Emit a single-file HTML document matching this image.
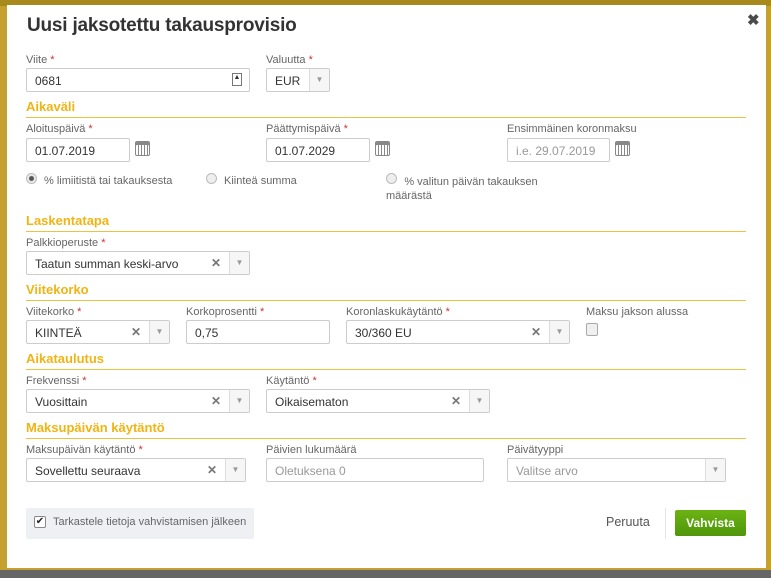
<!DOCTYPE html><html><head><meta charset="utf-8"><style>
*{box-sizing:border-box;margin:0;padding:0}
body{width:771px;height:578px;overflow:hidden;background:#c4a02e;font-family:"Liberation Sans",sans-serif;position:relative}
.top{position:absolute;left:0;top:0;width:771px;height:6px;background:#a88a1c}
.bot{position:absolute;left:0;top:570px;width:771px;height:8px;background:#666}
.m{position:absolute;left:7px;top:5px;width:759px;height:563px;background:#fff}
.a{position:absolute}
.t{left:27px;top:15px;font-size:19px;color:#333;font-weight:bold;letter-spacing:-0.2px}
.x{left:747px;top:11px;font-size:15px;color:#4a4a4a;font-weight:bold}
.l{font-size:11px;color:#666;white-space:nowrap}
.l b{color:#c33;font-weight:normal}
.h{left:26px;width:720px;font-size:13px;font-weight:bold;color:#f0b414;border-bottom:1px solid #f0c040;height:18px;line-height:14px}
.i{height:24px;border:1px solid #ccc;border-radius:2px;font-size:12px;color:#333;padding:5px 8px;white-space:nowrap;background:#fff}
.ph{color:#999}
.s .c{position:absolute;right:28px;top:4px;font-size:12px;color:#777;font-weight:bold}
.s .d{position:absolute;right:0;top:0;width:20px;height:22px;border-left:1px solid #ddd;background:#f6f6f6;color:#999;font-size:8px;text-align:center;line-height:22px}
.cal{width:15px;height:15px;border:1px solid #888;border-radius:2px;background:repeating-linear-gradient(90deg,#fff 0 2px,#888 2px 3px);box-shadow:inset 0 3px 0 #888}
.r{width:11px;height:11px;border-radius:50%;border:1px solid #bbb;background:#eee}
</style></head><body>
<div class="top"></div><div class="bot"></div>
<div class="m"></div>
<div class="a t">Uusi jaksotettu takausprovisio</div>
<div class="a x">✖</div>

<div class="a l" style="left:26px;top:54px">Viite <b>*</b></div>
<div class="a i" style="left:26px;top:68px;width:224px">0681<span style="position:absolute;right:7px;top:4px;width:10px;height:13px;border:1px solid #777;font-size:7px;text-align:center">▲</span></div>
<div class="a l" style="left:266px;top:54px">Valuutta <b>*</b></div>
<div class="a i s" style="left:266px;top:68px;width:64px">EUR<span class="d">▼</span></div>

<div class="a h" style="top:100px">Aikaväli</div>
<div class="a l" style="left:26px;top:123px">Aloituspäivä <b>*</b></div>
<div class="a i" style="left:26px;top:138px;width:104px">01.07.2019</div><div class="a cal" style="left:135px;top:141px"></div>
<div class="a l" style="left:266px;top:123px">Päättymispäivä <b>*</b></div>
<div class="a i" style="left:266px;top:138px;width:104px">01.07.2029</div><div class="a cal" style="left:375px;top:141px"></div>
<div class="a l" style="left:507px;top:123px">Ensimmäinen koronmaksu</div>
<div class="a i ph" style="left:507px;top:138px;width:103px">i.e. 29.07.2019</div><div class="a cal" style="left:615px;top:141px"></div>

<div class="a r" style="left:26px;top:173px;background:radial-gradient(#555 0 2px,#eee 3px)"></div><div class="a l" style="left:44px;top:175px">% limiitistä tai takauksesta</div>
<div class="a r" style="left:206px;top:173px"></div><div class="a l" style="left:224px;top:175px">Kiinteä summa</div>
<div class="a r" style="left:386px;top:173px"></div><div class="a l" style="left:386px;top:175px;line-height:14px">&nbsp;&nbsp;&nbsp;&nbsp;&nbsp;&nbsp;% valitun päivän takauksen<br>määrästä</div>

<div class="a h" style="top:214px">Laskentatapa</div>
<div class="a l" style="left:26px;top:237px">Palkkioperuste <b>*</b></div>
<div class="a i s" style="left:26px;top:251px;width:224px">Taatun summan keski-arvo<span class="c">✕</span><span class="d">▼</span></div>

<div class="a h" style="top:283px">Viitekorko</div>
<div class="a l" style="left:26px;top:306px">Viitekorko <b>*</b></div>
<div class="a i s" style="left:26px;top:320px;width:144px">KIINTEÄ<span class="c">✕</span><span class="d">▼</span></div>
<div class="a l" style="left:186px;top:306px">Korkoprosentti <b>*</b></div>
<div class="a i" style="left:186px;top:320px;width:144px">0,75</div>
<div class="a l" style="left:346px;top:306px">Koronlaskukäytäntö <b>*</b></div>
<div class="a i s" style="left:346px;top:320px;width:224px">30/360 EU<span class="c">✕</span><span class="d">▼</span></div>
<div class="a l" style="left:586px;top:306px">Maksu jakson alussa</div>
<div class="a" style="left:586px;top:323px;width:12px;height:13px;border:1px solid #aaa;border-radius:2px;background:#f0f0f0"></div>

<div class="a h" style="top:352px">Aikataulutus</div>
<div class="a l" style="left:26px;top:375px">Frekvenssi <b>*</b></div>
<div class="a i s" style="left:26px;top:389px;width:224px">Vuosittain<span class="c">✕</span><span class="d">▼</span></div>
<div class="a l" style="left:266px;top:375px">Käytäntö <b>*</b></div>
<div class="a i s" style="left:266px;top:389px;width:224px">Oikaisematon<span class="c">✕</span><span class="d">▼</span></div>

<div class="a h" style="top:421px">Maksupäivän käytäntö</div>
<div class="a l" style="left:26px;top:444px">Maksupäivän käytäntö <b>*</b></div>
<div class="a i s" style="left:26px;top:458px;width:220px">Sovellettu seuraava<span class="c">✕</span><span class="d">▼</span></div>
<div class="a l" style="left:266px;top:444px">Päivien lukumäärä</div>
<div class="a i ph" style="left:266px;top:458px;width:218px">Oletuksena 0</div>
<div class="a l" style="left:507px;top:444px">Päivätyyppi</div>
<div class="a i s ph" style="left:507px;top:458px;width:219px">Valitse arvo<span class="d">▼</span></div>

<div class="a" style="left:26px;top:508px;width:228px;height:31px;background:#eef0f4;border-radius:2px"></div>
<div class="a" style="left:34px;top:516px;width:12px;height:12px;border:1px solid #888;border-radius:2px;background:#fff;font-size:10px;line-height:10px;text-align:center;color:#222">✔</div>
<div class="a l" style="left:53px;top:516px;font-size:11px">Tarkastele tietoja vahvistamisen jälkeen</div>
<div class="a" style="left:606px;top:515px;font-size:12.5px;color:#555">Peruuta</div>
<div class="a" style="left:665px;top:508px;width:1px;height:31px;background:#e4e4e4"></div>
<div class="a" style="left:675px;top:510px;width:71px;height:26px;background:linear-gradient(#6bb314,#4f960a);border-radius:2px;color:#fff;font-size:12px;font-weight:bold;text-align:center;line-height:26px">Vahvista</div>
</body></html>
